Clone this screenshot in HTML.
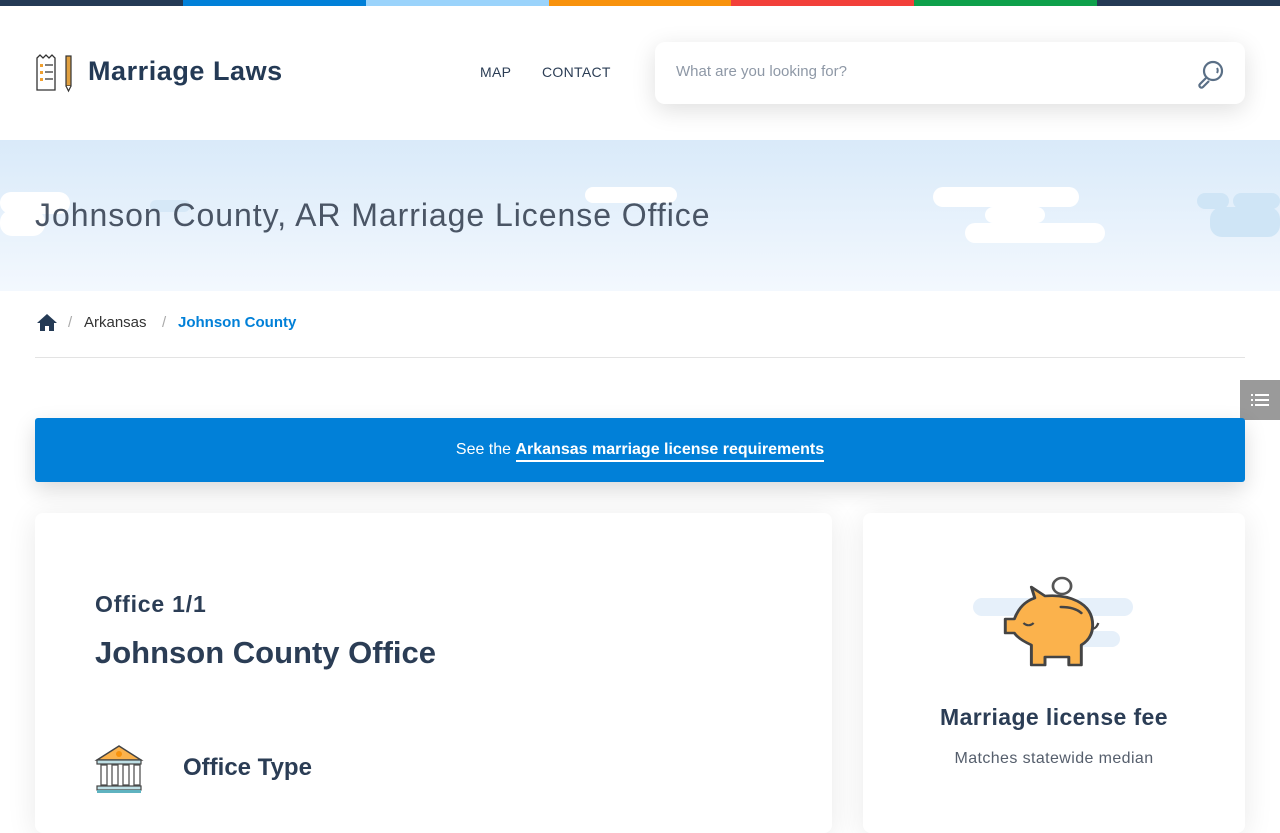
<!DOCTYPE html>
<html><head><meta charset="utf-8"><style>
*{margin:0;padding:0;box-sizing:border-box}
body{width:1280px;height:800px;overflow:hidden;background:#fff;font-family:"Liberation Sans",sans-serif;color:#2b3d55;position:relative}
.bar{position:absolute;top:0;height:6px}
header{position:absolute;top:6px;left:0;width:1280px;height:134px;background:#fff}
.logo{position:absolute;left:88px;top:50px;font-size:27px;font-weight:bold;color:#243a55;letter-spacing:.55px}
.nav{position:absolute;top:58px;font-size:14px;color:#2b3d55;letter-spacing:.3px}
.search{position:absolute;left:655px;top:42px;width:590px;height:62px;background:#fff;border-radius:10px;box-shadow:0 6px 24px rgba(0,0,0,.13)}
.search span{position:absolute;left:21px;top:21px;color:#8e98a6;font-size:15px}
.hero{position:absolute;top:140px;left:0;width:1280px;height:151px;background:linear-gradient(#d9eaf9,#f3f8fe)}
.cl{position:absolute;background:#fff;border-radius:12px}
.cb{position:absolute;background:#cfe5f6;border-radius:12px}
h1{position:absolute;left:35px;top:197px;font-size:32px;font-weight:normal;color:#4a5565;letter-spacing:.95px}
.bc{position:absolute;top:314px;font-size:15px}
.hr{position:absolute;left:35px;top:357px;width:1210px;height:1px;background:#e3e3e3}
.blue{position:absolute;left:35px;top:418px;width:1210px;height:64px;background:#0180d8;border-radius:3px;box-shadow:0 8px 22px rgba(0,0,0,.15);color:#fff;text-align:center;font-size:16px;line-height:64px}
.blue b{border-bottom:2px solid #fff;padding-bottom:2px}
.card{position:absolute;background:#fff;border-radius:8px;box-shadow:0 4px 30px rgba(0,0,0,.09)}
.toc{position:absolute;left:1240px;top:380px;width:40px;height:40px;background:#9a9a9a}
</style></head><body>
<div class="bar" style="left:0;width:183px;background:#243a55"></div>
<div class="bar" style="left:183px;width:183px;background:#0180d8"></div>
<div class="bar" style="left:366px;width:183px;background:#9ad3fb"></div>
<div class="bar" style="left:549px;width:182px;background:#f8920d"></div>
<div class="bar" style="left:731px;width:183px;background:#f2403a"></div>
<div class="bar" style="left:914px;width:183px;background:#0ea04b"></div>
<div class="bar" style="left:1097px;width:183px;background:#243a55"></div>
<header>
<svg style="position:absolute;left:35px;top:46px" width="40" height="42" viewBox="0 0 40 42"><path d="M2 6l3-3 3 3 3-3 3 3 3-3 3 3v32H2z" fill="#fff" stroke="#333" stroke-width="1.3"/><rect x="5" y="12" width="3" height="3" fill="#f0a030"/><rect x="5" y="19" width="3" height="3" fill="#f0a030"/><rect x="5" y="26" width="3" height="3" fill="#f0a030"/><path d="M10 13h8M10 20h8M10 27h8" stroke="#333" stroke-width="1.3"/><rect x="31" y="4" width="5" height="30" fill="#e0a040" stroke="#333" stroke-width="1.2"/><path d="M31 34l2.5 5 2.5-5" fill="#fff" stroke="#333" stroke-width="1.2"/></svg>
<div class="logo">Marriage Laws</div>
<div class="nav" style="left:480px">MAP</div>
<div class="nav" style="left:542px">CONTACT</div>
</header>
<div class="search"><span>What are you looking for?</span>
<svg style="position:absolute;left:540px;top:16px" width="32" height="32" viewBox="0 0 32 32"><circle cx="18" cy="13" r="9" fill="none" stroke="#5a6f86" stroke-width="2.2"/><path d="M11 20l-6 6a2 2 0 0 0 3 3l6-6" fill="none" stroke="#5a6f86" stroke-width="2.2"/><path d="M22 10a5 5 0 0 1 0 5" fill="none" stroke="#5a6f86" stroke-width="2"/></svg></div>
<div class="hero">
<div class="cl" style="left:0;top:52px;width:70px;height:22px"></div>
<div class="cl" style="left:0;top:70px;width:45px;height:26px"></div>
<div class="cb" style="left:150px;top:60px;width:40px;height:12px;background:#d6e8f7"></div>
<div class="cl" style="left:585px;top:47px;width:92px;height:16px"></div>
<div class="cl" style="left:933px;top:47px;width:146px;height:20px"></div>
<div class="cl" style="left:985px;top:67px;width:60px;height:16px"></div>
<div class="cl" style="left:965px;top:83px;width:140px;height:20px"></div>
<div class="cb" style="left:1197px;top:53px;width:32px;height:16px"></div>
<div class="cb" style="left:1233px;top:53px;width:47px;height:16px"></div>
<div class="cb" style="left:1210px;top:67px;width:70px;height:30px"></div>
</div>
<h1>Johnson County, AR Marriage License Office</h1>
<svg style="position:absolute;left:36px;top:313px" width="22" height="19" viewBox="0 0 22 19"><path d="M11 1L1 10h3v8h5v-5h4v5h5v-8h3z" fill="#243a55"/></svg>
<div class="bc" style="left:68px;color:#aaa">/</div>
<div class="bc" style="left:84px;color:#333">Arkansas</div>
<div class="bc" style="left:162px;color:#aaa">/</div>
<div class="bc" style="left:178px;color:#0180d8;font-weight:bold">Johnson County</div>
<div class="hr"></div>
<div class="toc"><svg style="position:absolute;left:11px;top:13px" width="18" height="14"><g fill="#fff"><rect x="0" y="1" width="2" height="2"/><rect x="4" y="1" width="14" height="2"/><rect x="0" y="6" width="2" height="2"/><rect x="4" y="6" width="14" height="2"/><rect x="0" y="11" width="2" height="2"/><rect x="4" y="11" width="14" height="2"/></g></svg></div>
<div class="blue">See the <b>Arkansas marriage license requirements</b></div>
<div class="card" style="left:35px;top:513px;width:797px;height:320px">
<div style="position:absolute;left:60px;top:78px;font-size:23px;font-weight:bold;color:#2b3d55;letter-spacing:.8px">Office 1/1</div>
<div style="position:absolute;left:60px;top:122px;font-size:31px;font-weight:bold;color:#2b3d55">Johnson County Office</div>
<svg style="position:absolute;left:59px;top:231px" width="50" height="52" viewBox="0 0 50 52"><path d="M3 16L25 2l22 14z" fill="#fbb24c" stroke="#444" stroke-width="1.5"/><circle cx="25" cy="10" r="3" fill="#f8920d"/><rect x="3" y="16" width="44" height="4" fill="#bfe0e6" stroke="#444" stroke-width="1.2"/><g fill="#fff" stroke="#555" stroke-width="1.3"><rect x="7" y="21" width="6" height="20"/><rect x="18" y="21" width="6" height="20"/><rect x="29" y="21" width="6" height="20"/><rect x="40" y="21" width="6" height="20"/></g><rect x="3" y="42" width="44" height="4" fill="#bfe0e6" stroke="#444" stroke-width="1.2"/><rect x="3" y="46" width="44" height="3" fill="#5fb3c0"/></svg>
<div style="position:absolute;left:148px;top:241px;font-size:24px;font-weight:bold;color:#2b3d55">Office Type</div>
</div>
<div class="card" style="left:863px;top:513px;width:382px;height:320px">
<div class="cb" style="left:110px;top:85px;width:90px;height:18px;background:#e6f0fa;border-radius:9px"></div>
<div class="cb" style="left:210px;top:85px;width:60px;height:18px;background:#e6f0fa;border-radius:9px"></div>
<div class="cb" style="left:200px;top:118px;width:57px;height:16px;background:#e6f0fa;border-radius:8px"></div>
<svg style="position:absolute;left:123px;top:62px" width="118" height="96" viewBox="0 0 104 96" preserveAspectRatio="none"><circle cx="67" cy="11" r="8" fill="#fff" stroke="#555" stroke-width="2.4"/><path d="M25 58h-8v-14h8c4-12 10-18 18-21l-3-11 12 9c20-2 42 6 42 29 0 10-4 16-10 20v20H73v-8H52v8H40V70c-6-3-12-7-15-12z" fill="#fbb24c" stroke="#444" stroke-width="2.6" stroke-linejoin="round"/><path d="M66 32c8 0 14 2 18 6" fill="none" stroke="#444" stroke-width="2.4" stroke-linecap="round"/><path d="M33 48c3 3 6 3 9 0" fill="none" stroke="#444" stroke-width="2"/><path d="M94 54c3-1 4-3 5-6" fill="none" stroke="#444" stroke-width="2"/></svg>
<div style="position:absolute;left:0;width:382px;text-align:center;top:191px;font-size:23px;font-weight:bold;color:#2b3d55;letter-spacing:.4px">Marriage license fee</div>
<div style="position:absolute;left:0;width:382px;text-align:center;top:237px;font-size:16px;color:#555e6c;letter-spacing:.4px">Matches statewide median</div>
</div>
</body></html>
